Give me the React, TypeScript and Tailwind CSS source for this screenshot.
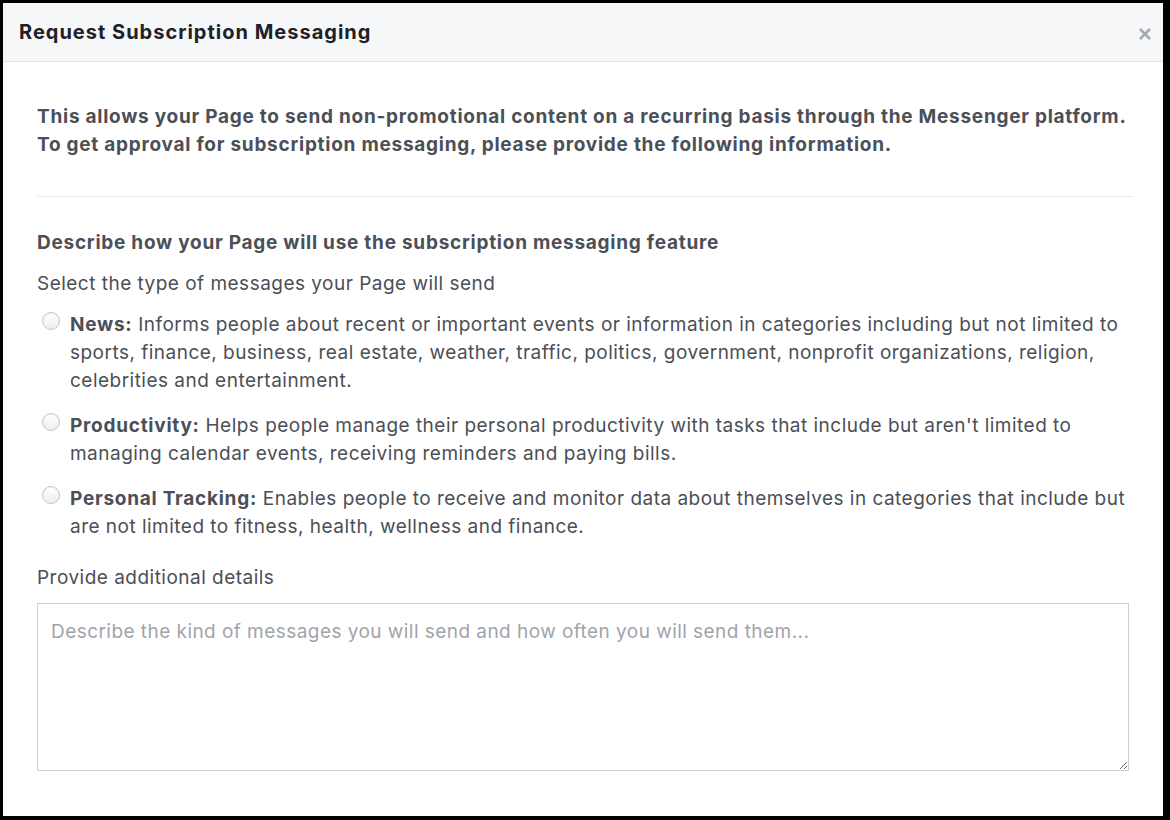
import React from 'react';

const options = [
  {
    label: 'News:',
    text: ' Informs people about recent or important events or information in categories including but not limited to sports, finance, business, real estate, weather, traffic, politics, government, nonprofit organizations, religion, celebrities and entertainment.',
  },
  {
    label: 'Productivity:',
    text: " Helps people manage their personal productivity with tasks that include but aren't limited to managing calendar events, receiving reminders and paying bills.",
  },
  {
    label: 'Personal Tracking:',
    text: ' Enables people to receive and monitor data about themselves in categories that include but are not limited to fitness, health, wellness and finance.',
  },
];

function Radio() {
  return (
    <span className="mt-[1px] h-[18px] w-[18px] shrink-0 rounded-full border border-[#c4c6ca] bg-gradient-to-b from-[#ffffff] to-[#eceef1] shadow-[inset_0_1px_1px_rgba(0,0,0,0.05)]" />
  );
}

export default function App() {
  return (
    <div className="h-[820px] w-[1170px] bg-black pb-[4px] pl-[3px] pr-[7px] pt-[3px] font-['Inter','Liberation_Sans',sans-serif]">
      <div className="flex h-full flex-col bg-white">
        <div className="flex h-[59px] shrink-0 items-center justify-between border-b border-[#e5e5e5] bg-[#f6f7f9] pl-[16px] pr-[11px]">
          <h1 className="text-[20px] font-bold tracking-[1px] text-[#1d2129]">Request Subscription Messaging</h1>
          <svg width="14" height="14" viewBox="0 0 14 14" className="mt-[4px]">
            <path d="M2 2 L12 12 M12 2 L2 12" stroke="#a5a8ad" strokeWidth="2.6" strokeLinecap="butt" />
          </svg>
        </div>
        <div className="flex flex-col pl-[34px] pr-[30px] pt-[41px] text-[19px] leading-[28px] tracking-[0.48px] text-[#4b4f56]">
          <p className="font-bold tracking-[0.74px]">
            This allows your Page to send non-promotional content on a recurring basis through the Messenger platform.
            <br />
            To get approval for subscription messaging, please provide the following information.
          </p>
          <div className="mt-[37px] h-px bg-[#e9ebee]" />
          <p className="mt-[32px] font-bold tracking-[0.74px]">Describe how your Page will use the subscription messaging feature</p>
          <p className="mt-[13px]">Select the type of messages your Page will send</p>
          <div className="mt-[13px] flex flex-col gap-[17px]">
            {options.map(o => (
              <div key={o.label} className="flex items-start gap-[10px] pl-[5px]">
                <Radio />
                <p>
                  <b className="font-bold tracking-[0.74px]">{o.label}</b>
                  {o.text}
                </p>
              </div>
            ))}
          </div>
          <p className="mt-[23px]">Provide additional details</p>
          <textarea
            className="mr-[4px] mt-[11px] h-[168px] resize-y border border-[#ccd0d5] px-[13px] py-[14px] text-[19px] leading-[28px] tracking-[0.45px] text-[#1d2129] outline-none placeholder:text-[#a0a4ab]"
            placeholder="Describe the kind of messages you will send and how often you will send them..."
          />
        </div>
      </div>
    </div>
  );
}
